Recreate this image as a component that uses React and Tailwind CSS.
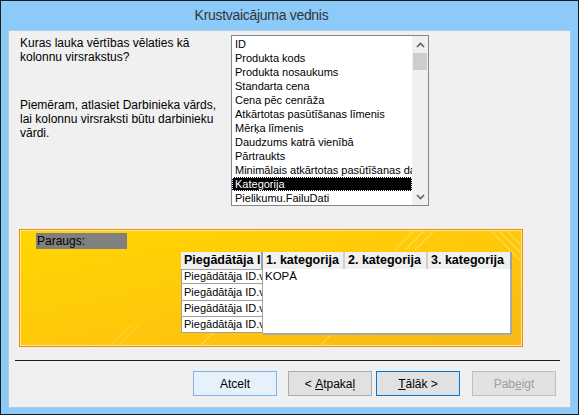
import React from 'react'

const fields = [
  'ID',
  'Produkta kods',
  'Produkta nosaukums',
  'Standarta cena',
  'Cena pēc cenrāža',
  'Atkārtotas pasūtīšanas līmenis',
  'Mērķa līmenis',
  'Daudzums katrā vienībā',
  'Pārtraukts',
  'Minimālais atkārtotas pasūtīšanas daudzums',
  'Kategorija',
  'Pielikumu.FailuDati',
]

const ui = { fontFamily: '"Liberation Sans", Arial, sans-serif' }

function Chevron({ up }) {
  return (
    <svg width="9" height="6" viewBox="0 0 9 6">
      <polyline
        points={up ? '1,5 4.5,1.5 8,5' : '1,1 4.5,4.5 8,1'}
        fill="none"
        stroke="#606060"
        strokeWidth="1.6"
      />
    </svg>
  )
}

function FieldList() {
  return (
    <div className="w-[198px] h-[171px] border border-[#828790] bg-white flex overflow-hidden">
      <div className="flex-1 min-w-0 pt-px">
        {fields.map((f, i) => (
          <div
            key={f}
            className={`h-[14px] leading-[14px] text-[11px] pl-[3px] whitespace-nowrap overflow-hidden ${
              i === 10
                ? 'bg-black text-white outline-1 outline-dotted outline-offset-[-1px] outline-[#ffffff]'
                : 'text-black'
            }`}
          >
            {f}
          </div>
        ))}
      </div>
      <div className="w-[16px] bg-[#f0f0f0] flex flex-col">
        <div className="h-[17px] flex items-center justify-center">
          <Chevron up />
        </div>
        <div className="h-[17px] bg-[#cdcdcd] mx-px" />
        <div className="flex-1" />
        <div className="h-[17px] flex items-center justify-center">
          <Chevron />
        </div>
      </div>
    </div>
  )
}

function Sample() {
  const rows = [15, 17, 16, 16]
  return (
    <div className="relative w-[504px] h-[118px] border border-[#f08a1c] bg-gradient-to-br from-[#ffd600] via-[#ffc90a] to-[#f9b714] shadow-[inset_0_0_0_1px_#ffe98a] overflow-hidden">
      <svg className="absolute inset-0" width="502" height="116" viewBox="0 0 502 116">
        <polyline points="245,45 268,22 291,45" fill="none" stroke="#ffe36a" strokeWidth="2" opacity="0.8" />
        <polyline points="180,116 220,76" fill="none" stroke="#ffe36a" strokeWidth="1.5" opacity="0.6" />
        <polyline points="300,116 340,76" fill="none" stroke="#ffe36a" strokeWidth="1.5" opacity="0.5" />
        <polyline points="375,20 395,0" fill="none" stroke="#ffe36a" strokeWidth="1.5" opacity="0.6" />
        <polyline points="385,20 405,0" fill="none" stroke="#ffe36a" strokeWidth="1.5" opacity="0.6" />
        <polyline points="395,20 415,0" fill="none" stroke="#ffe36a" strokeWidth="1.5" opacity="0.6" />
        <polyline points="470,0 502,32" fill="none" stroke="#ffe36a" strokeWidth="1.5" opacity="0.6" />
        <polyline points="478,0 502,24" fill="none" stroke="#ffe36a" strokeWidth="1.5" opacity="0.6" />
        <polyline points="486,0 502,16" fill="none" stroke="#ffe36a" strokeWidth="1.5" opacity="0.6" />
        <polyline points="90,116 110,96" fill="none" stroke="#ffe36a" strokeWidth="1.5" opacity="0.4" />
        <polyline points="98,116 118,96" fill="none" stroke="#ffe36a" strokeWidth="1.5" opacity="0.4" />
      </svg>
      <div className="relative pl-[16px] pt-[3px] flex flex-col">
        <div className="w-[91px] h-[16px] bg-[#808080] text-[12px] leading-[16px] pl-px text-black">
          Paraugs:
        </div>
        <div className="ml-[145px] mt-[3px] w-[331px] flex flex-col text-[11px]">
          <div className="h-[17px] flex font-bold text-[12.5px]">
            <div className="w-[82px] bg-[#f0f0f0] border-r-2 border-[#a0a0a0] pl-[3px] leading-[17px] overflow-hidden whitespace-nowrap">
              Piegādātāja ID
            </div>
            <div className="w-[82px] bg-[#f0f0f0] border-r-2 border-[#d0d0d0] pl-[3px] leading-[17px] overflow-hidden whitespace-nowrap">
              1. kategorija
            </div>
            <div className="w-[83px] bg-[#f0f0f0] border-r-2 border-[#d0d0d0] pl-[3px] leading-[17px] overflow-hidden whitespace-nowrap">
              2. kategorija
            </div>
            <div className="w-[84px] bg-[#f0f0f0] border-r-2 border-[#a0a0a0] pl-[3px] leading-[17px] overflow-hidden whitespace-nowrap">
              3. kategorija
            </div>
          </div>
          <div className="flex">
            <div className="w-[82px] flex flex-col">
              {rows.map((h, i) => (
                <div
                  key={i}
                  style={{ height: h }}
                  className="bg-white border border-[#a0a0a0] border-t-0 first:border-t pl-[2px] flex items-center overflow-hidden whitespace-nowrap"
                >
                  Piegādātāja ID.vērtība
                </div>
              ))}
            </div>
            <div className="flex-1 bg-white border-r-2 border-b-2 border-[#a8a8a8] h-[66px] pl-[2px] leading-[15px] text-[11.5px]">
              KOPĀ
            </div>
          </div>
        </div>
      </div>
    </div>
  )
}

function Btn({ children, variant }) {
  const styles = {
    hover: 'bg-[#e5f1fb] border-[#7eb4ea] text-black',
    normal: 'bg-[#e1e1e1] border-[#adadad] text-black',
    focus: 'bg-[#e1e1e1] border-[#0078d7] text-black',
    disabled: 'bg-[#cccccc]/40 border-[#bfbfbf] text-[#a0a0a0]',
  }
  return (
    <button className={`w-[84px] h-[25px] border text-[12px] flex items-center justify-center ${styles[variant]}`}>
      {children}
    </button>
  )
}

export default function App() {
  return (
    <div className="w-[579px] h-[415px] bg-[#8ccbf9] border border-[#1b1b1b] flex flex-col" style={ui}>
      {/* Title */}
      <div className="h-[29px] flex items-center justify-center pr-[56px] text-[14px] tracking-[-0.3px] text-[#333333]">
        Krustvaicājuma vednis
      </div>

      {/* Client area */}
      <div className="mx-[7px] mb-[6px] flex-1 bg-[#f0f0f0] border border-[#b0cbe3] flex flex-col">
        <div className="flex pt-[4px]">
          <div className="w-[211px] ml-[11px] pt-[1px] text-[12px] leading-[14px] text-black">
            <p>Kuras lauka vērtības vēlaties kā kolonnu virsrakstus?</p>
            <p className="mt-[34px]">
              Piemēram, atlasiet Darbinieka vārds, lai kolonnu virsraksti būtu darbinieku vārdi.
            </p>
          </div>
          <FieldList />
        </div>

        <div className="ml-[10px] mt-[23px]">
          <Sample />
        </div>

        <div className="ml-[6px] mt-[13px] w-[545px] h-px bg-[#1e1e1e]" />

        <div className="flex ml-[184px] mt-[10px]">
          <Btn variant="hover">Atcelt</Btn>
          <div className="ml-[11px]">
            <Btn variant="normal">
              &lt;&nbsp;<u>A</u>tpakaļ
            </Btn>
          </div>
          <div className="ml-[4px]">
            <Btn variant="focus">
              <u>T</u>ālāk&nbsp;&gt;
            </Btn>
          </div>
          <div className="ml-[12px]">
            <Btn variant="disabled">
              Pab<u>e</u>igt
            </Btn>
          </div>
        </div>
      </div>
    </div>
  )
}
